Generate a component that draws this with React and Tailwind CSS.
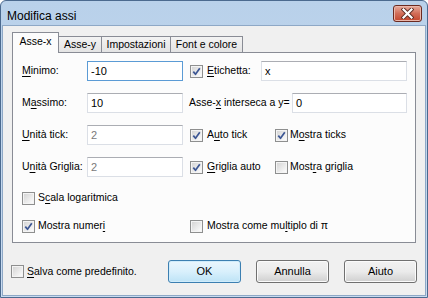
import React from 'react';

const font = { fontFamily: '"Liberation Sans", Arial, sans-serif' };

const Key = ({ children }) => <span className="underline underline-offset-[2px] decoration-1">{children}</span>;

const Check = ({ checked }) => (
  <span className="w-[13px] h-[13px] shrink-0 flex border border-[#8e8f8f] bg-[#f4f4f4] p-px">
    <span className="flex-1 flex items-center justify-center bg-gradient-to-br from-[#d6d6d6] to-[#fbfbfb]">
      {checked && (
        <svg width="9" height="9" viewBox="0 0 9 9">
          <path d="M1.3 4.6 L3.5 7.3 L7.8 1.2" fill="none" stroke="#3d5794" strokeWidth="1.7" strokeLinejoin="round" />
        </svg>
      )}
    </span>
  </span>
);

const Input = ({ value, width, focused, disabled }) => (
  <div
    className={`h-[20px] shrink-0 flex items-center pl-[3px] bg-white border text-[11px] ${
      focused ? 'border-[#5b9bd5]' : 'border-[#dbdfe6] border-t-[#abadb3]'
    } ${disabled ? 'text-[#7a7a7a]' : 'text-black'} ${width}`}
  >
    {value}
  </div>
);

const Button = ({ children, primary }) => (
  <div
    className={`w-[73px] h-[23px] flex items-center justify-center rounded-[3px] border ${
      primary
        ? 'border-[#3c7fb1] bg-gradient-to-b from-[#eaf6fd] via-[#d9f0fc] to-[#bde3f6] shadow-[inset_0_0_0_1px_#d0ecfb]'
        : 'border-[#707070] bg-gradient-to-b from-[#f2f2f2] via-[#ebebeb] to-[#cfcfcf] shadow-[inset_0_0_0_1px_#fbfbfb]'
    }`}
  >
    {children}
  </div>
);

const tabs = [
  { name: 'Asse-x', w: 'w-[47px]' },
  { name: 'Asse-y', w: 'w-[44px]' },
  { name: 'Impostazioni', w: 'w-[70px]' },
  { name: 'Font e colore', w: 'w-[73px]' },
];

export default function App() {
  return (
    <div style={font} className="w-[428px] h-[298px] flex flex-col text-[10.5px] whitespace-nowrap text-black border border-[#4b6a8f] rounded-t-[6px] bg-gradient-to-b from-[#b9d1ea] to-[#c9dbf0] overflow-hidden">
      {/* title bar */}
      <div className="h-[24px] shrink-0 flex justify-between pl-[6px] pr-[5px]">
        <span className="text-[12px] leading-none pt-[9px]">Modifica assi</span>
        <div className="mt-[4px] w-[29px] h-[17px] rounded-[3px] border border-[#6b2a20] bg-gradient-to-b from-[#e6ab9d] via-[#d16d58] to-[#c3452c] flex items-center justify-center shadow-[inset_0_0_0_1px_#eab7ab]">
          <svg width="13" height="11" viewBox="0 0 13 11">
            <path d="M2.5 1.5 L10.5 9.5 M10.5 1.5 L2.5 9.5" stroke="#5a2a22" strokeWidth="4" strokeLinecap="square" />
            <path d="M2.5 1.5 L10.5 9.5 M10.5 1.5 L2.5 9.5" stroke="#ffffff" strokeWidth="2.2" strokeLinecap="square" />
          </svg>
        </div>
      </div>

      {/* client area */}
      <div className="flex-1 mx-px mb-px bg-[#f0f0f0] border border-[#8ea8c6] flex flex-col pt-[7px] pl-[9px] pr-[9px]">
        {/* tabs */}
        <div className="flex items-end h-[20px] -mb-px">
          {tabs.map((t, i) =>
            i === 0 ? (
              <div key={t.name} className={`${t.w} h-[21px] relative z-10 bg-[#fcfcfc] border border-b-0 border-[#898c95] flex items-center justify-center pb-[2px]`}>
                {t.name}
              </div>
            ) : (
              <div key={t.name} className={`${t.w} h-[17px] -ml-px bg-gradient-to-b from-[#f3f3f3] to-[#e3e3e3] border border-b-0 border-[#898c95] flex items-center justify-center`}>
                {t.name}
              </div>
            )
          )}
        </div>

        {/* panel */}
        <div className="h-[191px] border border-[#898c95] bg-[#fcfcfc] flex flex-col pt-[8px] pl-[9px]">
          <div className="flex items-center h-[20px]">
            <span className="w-[65px]"><Key>M</Key>inimo:</span>
            <Input value="-10" width="w-[96px]" focused />
            <div className="w-[71px] ml-[7px] flex items-center gap-[4px]">
              <Check checked />
              <span><Key>E</Key>tichetta:</span>
            </div>
            <Input value="x" width="w-[146px]" />
          </div>

          <div className="flex items-center h-[20px] mt-[12px]">
            <span className="w-[65px]">M<Key>a</Key>ssimo:</span>
            <Input value="10" width="w-[96px]" />
            <span className="w-[103px] ml-[6px]">Asse-<Key>x</Key> interseca a y=</span>
            <Input value="0" width="w-[115px]" />
          </div>

          <div className="flex items-center h-[20px] mt-[12px]">
            <span className="w-[65px]"><Key>U</Key>nità tick:</span>
            <Input value="2" width="w-[96px]" disabled />
            <div className="w-[85px] ml-[7px] flex items-center gap-[4px]">
              <Check checked />
              <span>A<Key>u</Key>to tick</span>
            </div>
            <div className="flex items-center gap-[2px]">
              <Check checked />
              <span>M<Key>o</Key>stra ticks</span>
            </div>
          </div>

          <div className="flex items-center h-[20px] mt-[12px]">
            <span className="w-[65px]">U<Key>n</Key>ità Griglia:</span>
            <Input value="2" width="w-[96px]" disabled />
            <div className="w-[85px] ml-[7px] flex items-center gap-[4px]">
              <Check checked />
              <span><Key>G</Key>riglia auto</span>
            </div>
            <div className="flex items-center gap-[2px]">
              <Check />
              <span>Most<Key>r</Key>a griglia</span>
            </div>
          </div>

          <div className="flex items-center h-[20px] mt-[11px] gap-[3px]">
            <Check />
            <span>S<Key>c</Key>ala logaritmica</span>
          </div>

          <div className="flex items-center h-[20px] mt-[8px]">
            <div className="w-[168px] flex items-center gap-[3px]">
              <Check checked />
              <span>Mostra numer<Key>i</Key></span>
            </div>
            <div className="flex items-center gap-[4px]">
              <Check />
              <span>Mostra come mu<Key>l</Key>tiplo di π</span>
            </div>
          </div>
        </div>

        {/* bottom bar */}
        <div className="flex items-center h-[23px] mt-[17px] -ml-[1px] -mr-px">
          <div className="flex items-center gap-[3px]">
            <Check />
            <span><Key>S</Key>alva come predefinito.</span>
          </div>
          <div className="ml-auto flex gap-[15px] text-[11px]">
            <Button primary>OK</Button>
            <Button>Annulla</Button>
            <Button>Aiuto</Button>
          </div>
        </div>
      </div>
    </div>
  );
}
